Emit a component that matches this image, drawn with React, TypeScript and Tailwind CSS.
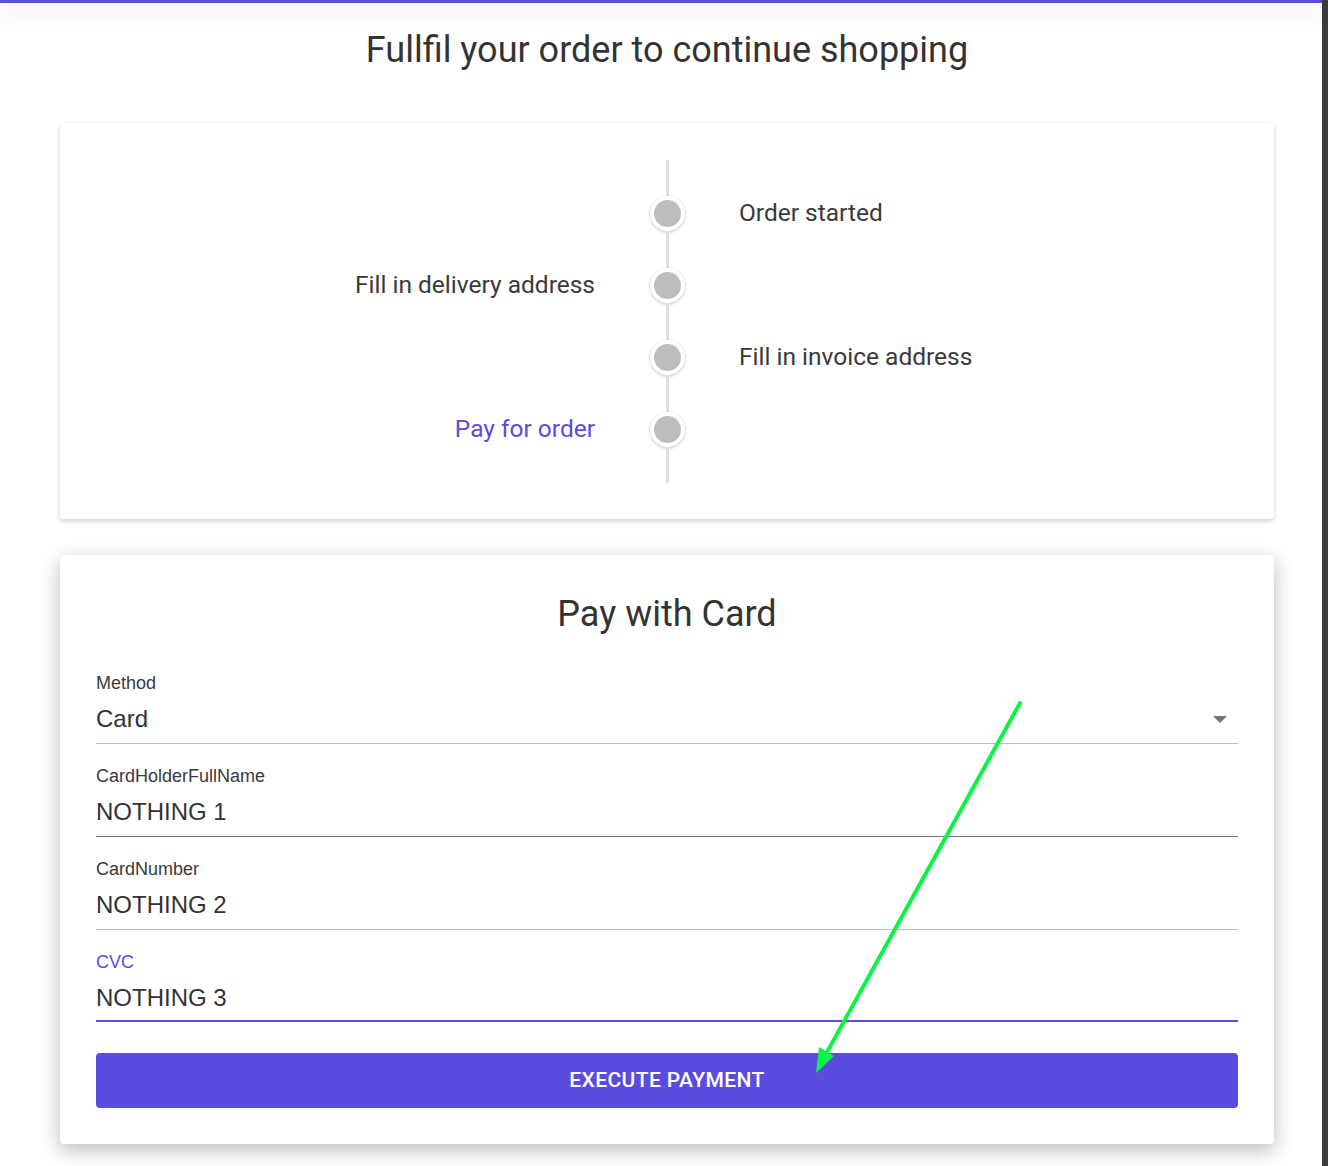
import React from "react";

interface Step {
  label: string;
  side: "left" | "right";
  active?: boolean;
}

const STEPS: Step[] = [
  { label: "Order started", side: "right" },
  { label: "Fill in delivery address", side: "left" },
  { label: "Fill in invoice address", side: "right" },
  { label: "Pay for order", side: "left", active: true },
];

interface Field {
  label: string;
  value: string;
  select?: boolean;
  hover?: boolean;
  focused?: boolean;
}

const FIELDS: Field[] = [
  { label: "Method", value: "Card", select: true },
  { label: "CardHolderFullName", value: "NOTHING 1", hover: true },
  { label: "CardNumber", value: "NOTHING 2" },
  { label: "CVC", value: "NOTHING 3", focused: true },
];

const roboto = { fontFamily: "Roboto, 'Noto Sans', sans-serif" };
const arial = { fontFamily: "'Liberation Sans', Arial, sans-serif" };

// Timeline rail segment (spacer above / below the steps)
function Rail({ height }: { height: string }) {
  return (
    <div className={`grid grid-cols-[1fr_144px_1fr] ${height}`}>
      <div />
      <div className="flex justify-center">
        <div className="w-[3px] h-full bg-[#e0e0e0]" />
      </div>
      <div />
    </div>
  );
}

function TimelineRow({ step }: { step: Step }) {
  const text = (
    <span
      className={`text-[24.5px] leading-[28px] ${step.active ? "text-[#5b4cdf]" : "text-[#3a3a3a]"}`}
      style={roboto}
    >
      {step.label}
    </span>
  );

  return (
    <div className="grid grid-cols-[1fr_144px_1fr] h-[72px]">
      <div className="flex items-center justify-end">{step.side === "left" && text}</div>
      <div className="flex flex-col items-center">
        <div className="w-[3px] flex-1 bg-[#e0e0e0]" />
        <div className="w-[35px] h-[35px] rounded-full bg-white shadow-[0_1px_3px_rgba(0,0,0,0.25)] flex items-center justify-center">
          <div className="w-[27px] h-[27px] rounded-full bg-[#bdbdbd]" />
        </div>
        <div className="w-[3px] flex-1 bg-[#e0e0e0]" />
      </div>
      <div className="flex items-center justify-start">{step.side === "right" && text}</div>
    </div>
  );
}

function FormField({ field }: { field: Field }) {
  const borderClass = field.focused
    ? "border-b-2 border-[#5b4cdf] pb-[8px]"
    : field.hover
      ? "border-b border-[#757575] pb-[10px]"
      : "border-b border-[#bdbdbd] pb-[10px]";

  return (
    <div className={`flex flex-col ${borderClass}`} style={arial}>
      <span
        className={`text-[18px] leading-[20px] ${field.focused ? "text-[#5b4cdf]" : "text-[#3a3a3a]"}`}
      >
        {field.label}
      </span>
      <div className="mt-[12px] flex items-center justify-between h-[28px]">
        <span className="text-[24px] leading-[28px] text-[#333]">{field.value}</span>
        {field.select && (
          <svg width="14" height="8" viewBox="0 0 14 8" className="mr-[11px] mt-[2px]">
            <path d="M0 0 L14 0 L7 7 Z" fill="#757575" />
          </svg>
        )}
      </div>
    </div>
  );
}

export default function App() {
  return (
    <div className="relative flex h-[1166px] overflow-hidden bg-white">
      <div className="flex-1 flex flex-col">
        {/* Top bar */}
        <div className="relative z-10 h-[3px] bg-[#5b4cdf] shadow-[0_6px_24px_rgba(0,0,0,0.3)]" />

        <div className="ml-[60px] w-[1214px] flex flex-col">
          <h1
            className="mt-[27px] text-center text-[36px] leading-[40px] text-[#333]"
            style={roboto}
          >
            Fullfil your order to continue shopping
          </h1>

          {/* Timeline card */}
          <div className="mt-[53px] rounded bg-white shadow-[0_2px_5px_rgba(0,0,0,0.2)] pt-[37px] pb-[36px]">
            <Rail height="h-[17px]" />
            {STEPS.map((step) => (
              <TimelineRow key={step.label} step={step} />
            ))}
            <Rail height="h-[18px]" />
          </div>

          {/* Payment card */}
          <div className="mt-[36px] rounded bg-white shadow-[0_6px_20px_rgba(0,0,0,0.28)] px-[36px] pt-[39px] pb-[36px]">
            <h2
              className="text-center text-[36px] leading-[40px] text-[#333]"
              style={roboto}
            >
              Pay with Card
            </h2>

            <div className="mt-[39px] flex flex-col gap-[22px]">
              {FIELDS.map((field) => (
                <FormField key={field.label} field={field} />
              ))}
            </div>

            <button
              className="mt-[31px] w-full h-[55px] rounded bg-[#5b4cdf] text-white text-[21px] font-medium tracking-[0.4px] uppercase"
              style={roboto}
            >
              Execute Payment
            </button>
          </div>
        </div>
      </div>

      {/* Window edge */}
      <div className="w-[6px] bg-[#3c3c3c]" />

      {/* Annotation arrow */}
      <svg
        className="absolute left-0 top-0 pointer-events-none"
        width="1328"
        height="1166"
        viewBox="0 0 1328 1166"
      >
        <line
          x1="1020"
          y1="703"
          x2="826"
          y2="1054"
          stroke="#08f542"
          strokeWidth="4"
          strokeLinecap="round"
        />
        <polygon points="816,1073 819,1047 834,1056" fill="#08f542" />
      </svg>
    </div>
  );
}
